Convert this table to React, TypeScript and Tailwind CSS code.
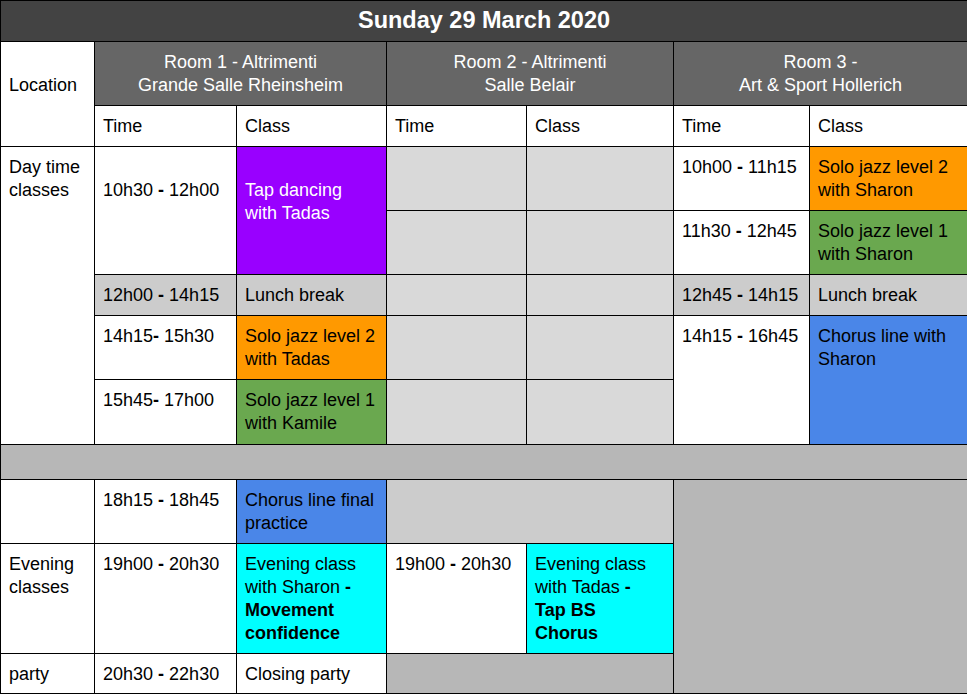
import React from "react";

const B = ({ children }: { children: React.ReactNode }) => <b className="font-bold">{children}</b>;

const cell = "border border-black px-2 pt-[9px] align-top text-left";
const empty = "border border-black bg-[#d9d9d9]";

const Time = ({ from, to, tight }: { from: string; to: string; tight?: boolean }) => (
  <>
    {from}
    {tight ? "" : " "}
    <B>-</B> {to}
  </>
);

const App = () => {
  return (
    <div className="bg-white w-[967px] h-[694px] overflow-hidden">
      <table
        className="table-fixed border-collapse w-[967px] text-[18px] leading-[23px] text-black"
        style={{ fontFamily: '"Liberation Sans", Arial, sans-serif' }}
      >
        <colgroup>
          <col className="w-[94px]" />
          <col className="w-[142px]" />
          <col className="w-[150px]" />
          <col className="w-[140px]" />
          <col className="w-[147px]" />
          <col className="w-[136px]" />
          <col className="w-[158px]" />
        </colgroup>
        <tbody>
          <tr className="h-[41px]">
            <td colSpan={7} className="border border-black bg-[#434343] text-white text-center align-middle font-bold text-[23.5px] leading-[27px] pb-[2px]">
              Sunday 29 March 2020
            </td>
          </tr>
          <tr className="h-[64px]">
            <td rowSpan={2} className="border border-black px-2 pt-[32px] align-top">
              Location
            </td>
            <td colSpan={2} className="border border-black bg-[#666666] text-white text-center align-middle">
              Room 1 - Altrimenti
              <br />
              Grande Salle Rheinsheim
            </td>
            <td colSpan={2} className="border border-black bg-[#666666] text-white text-center align-middle">
              Room 2 - Altrimenti
              <br />
              Salle Belair
            </td>
            <td colSpan={2} className="border border-black bg-[#666666] text-white text-center align-middle">
              Room 3 -
              <br />
              Art &amp; Sport Hollerich
            </td>
          </tr>
          <tr className="h-[41px]">
            <td className={cell}>Time</td>
            <td className={cell}>Class</td>
            <td className={cell}>Time</td>
            <td className={cell}>Class</td>
            <td className={cell}>Time</td>
            <td className={cell}>Class</td>
          </tr>

          {/* day time */}
          <tr className="h-[64px]">
            <td rowSpan={5} className={cell}>
              Day time
              <br />
              classes
            </td>
            <td rowSpan={2} className="border border-black px-2 pt-[32px] align-top">
              <Time from="10h30" to="12h00" />
            </td>
            <td rowSpan={2} className="border border-black px-2 pt-[32px] align-top bg-[#9900ff] text-white">
              Tap dancing
              <br />
              with Tadas
            </td>
            <td className={empty} />
            <td className={empty} />
            <td className={cell}>
              <Time from="10h00" to="11h15" />
            </td>
            <td className={`${cell} bg-[#ff9900]`}>
              Solo jazz level 2
              <br />
              with Sharon
            </td>
          </tr>
          <tr className="h-[64px]">
            <td className={empty} />
            <td className={empty} />
            <td className={cell}>
              <Time from="11h30" to="12h45" />
            </td>
            <td className={`${cell} bg-[#6aa84f]`}>
              Solo jazz level 1
              <br />
              with Sharon
            </td>
          </tr>
          <tr className="h-[41px]">
            <td className={`${cell} bg-[#cccccc]`}>
              <Time from="12h00" to="14h15" />
            </td>
            <td className={`${cell} bg-[#cccccc]`}>Lunch break</td>
            <td className={empty} />
            <td className={empty} />
            <td className={`${cell} bg-[#cccccc]`}>
              <Time from="12h45" to="14h15" />
            </td>
            <td className={`${cell} bg-[#cccccc]`}>Lunch break</td>
          </tr>
          <tr className="h-[64px]">
            <td className={cell}>
              <Time from="14h15" to="15h30" tight />
            </td>
            <td className={`${cell} bg-[#ff9900]`}>
              Solo jazz level 2
              <br />
              with Tadas
            </td>
            <td className={empty} />
            <td className={empty} />
            <td rowSpan={2} className={cell}>
              <Time from="14h15" to="16h45" />
            </td>
            <td rowSpan={2} className={`${cell} bg-[#4a86e8]`}>
              Chorus line with
              <br />
              Sharon
            </td>
          </tr>
          <tr className="h-[65px]">
            <td className={cell}>
              <Time from="15h45" to="17h00" tight />
            </td>
            <td className={`${cell} bg-[#6aa84f]`}>
              Solo jazz level 1
              <br />
              with Kamile
            </td>
            <td className={empty} />
            <td className={empty} />
          </tr>

          <tr className="h-[35px]">
            <td colSpan={7} className="border border-black bg-[#b7b7b7]" />
          </tr>

          {/* evening */}
          <tr className="h-[64px]">
            <td className={cell} />
            <td className={cell}>
              <Time from="18h15" to="18h45" />
            </td>
            <td className={`${cell} bg-[#4a86e8]`}>
              Chorus line final
              <br />
              practice
            </td>
            <td colSpan={2} className="border border-black bg-[#cccccc]" />
            <td colSpan={2} rowSpan={3} className="border border-black bg-[#b7b7b7]" />
          </tr>
          <tr className="h-[110px]">
            <td className={cell}>
              Evening
              <br />
              classes
            </td>
            <td className={cell}>
              <Time from="19h00" to="20h30" />
            </td>
            <td className={`${cell} bg-[#00ffff]`}>
              Evening class
              <br />
              with Sharon <B>-</B>
              <br />
              <B>Movement</B>
              <br />
              <B>confidence</B>
            </td>
            <td className={cell}>
              <Time from="19h00" to="20h30" />
            </td>
            <td className={`${cell} bg-[#00ffff]`}>
              Evening class
              <br />
              with Tadas <B>-</B>
              <br />
              <B>Tap BS</B>
              <br />
              <B>Chorus</B>
            </td>
          </tr>
          <tr className="h-[40px]">
            <td className={cell}>party</td>
            <td className={cell}>
              <Time from="20h30" to="22h30" />
            </td>
            <td className={cell}>Closing party</td>
            <td colSpan={2} className="border border-black bg-[#b7b7b7]" />
          </tr>
        </tbody>
      </table>
    </div>
  );
};

export default App;
